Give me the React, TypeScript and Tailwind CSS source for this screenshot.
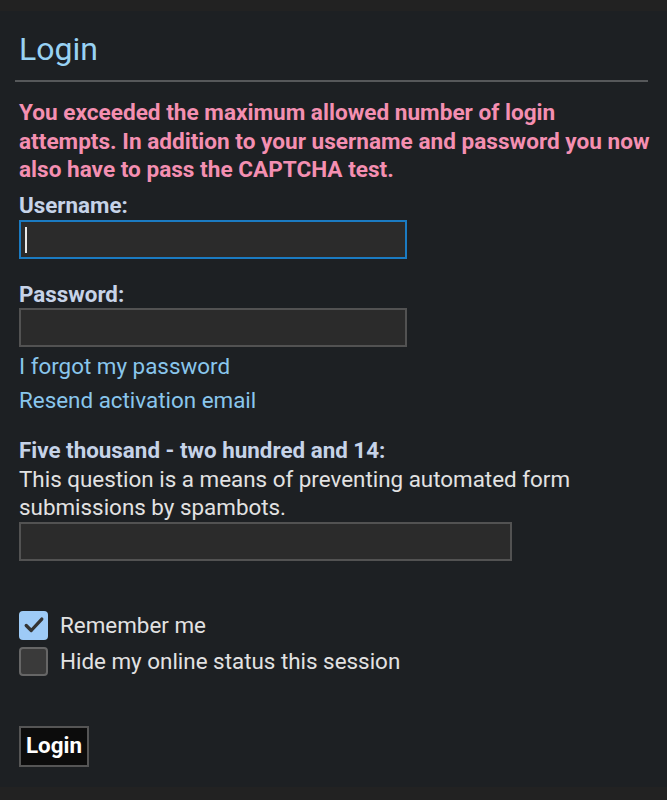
import React from 'react';

const font = { fontFamily: 'Roboto, "Noto Sans", sans-serif' };

const TextBox: React.FC<{ width: string; focused?: boolean }> = ({ width, focused }) => (
  <div
    className={`relative h-[39px] bg-[#2b2b2b] border-2 ${width} ${
      focused ? 'border-[#1b7bc2]' : 'border-[#525252]'
    }`}
  >
    {focused && <div className="absolute left-[4px] top-[5px] h-[26px] w-[2px] bg-[#e8e8e8]" />}
  </div>
);

const Check: React.FC<{ checked?: boolean; label: string }> = ({ checked, label }) => (
  <label className="flex items-center gap-[12px]">
    <span
      className={`flex h-[29px] w-[29px] items-center justify-center rounded-[4px] ${
        checked ? 'bg-[#9ecbf7]' : 'bg-[#3a3a3a] border-2 border-[#666]'
      }`}
    >
      {checked && (
        <svg viewBox="0 0 24 24" className="h-[22px] w-[22px]">
          <path d="M3.5 12.5 L9 18 L20.5 5.5" fill="none" stroke="#333" strokeWidth="3.6" strokeLinecap="round" strokeLinejoin="round" />
        </svg>
      )}
    </span>
    <span className="text-[22.4px] leading-[28px] text-[#e2e2e2]">{label}</span>
  </label>
);

export default function App() {
  return (
    <div className="min-h-[800px] bg-[#222222] pt-[11px]" style={font}>
      <div className="bg-[#1d2023] pl-[19px] pr-[15px] pt-[20px] pb-[20px]">
        <h2 className="text-[32px] leading-[36px] font-normal text-[#98d2f3]">Login</h2>
        <div className="mt-[13px] -ml-[4px] mr-[4px] h-[2px] bg-[#56585a]" />

        <p className="mt-[17px] text-[22.6px] leading-[28.5px] font-bold text-[#f48fb1]">
          You exceeded the maximum allowed number of login attempts. In addition to your username and password you now
          also have to pass the CAPTCHA test.
        </p>

        <div className="mt-[8px] text-[22.4px] leading-[24px] font-bold text-[#c6d3e8]">Username:</div>
        <div className="mt-[3px]">
          <TextBox width="w-[388px]" focused />
        </div>

        <div className="mt-[23px] text-[22.4px] leading-[24px] font-bold text-[#c6d3e8]">Password:</div>
        <div className="mt-[2px]">
          <TextBox width="w-[388px]" />
        </div>

        <div className="mt-[5px] flex flex-col gap-[6px] text-[22.4px] leading-[28px] text-[#89c6ec]">
          <a>I forgot my password</a>
          <a>Resend activation email</a>
        </div>

        <div className="mt-[24px] text-[22.4px] leading-[24px] font-bold text-[#c6d3e8]">
          Five thousand - two hundred and 14:
        </div>
        <p className="mt-[3px] text-[22.4px] leading-[28px] text-[#e2e2e2]">
          This question is a means of preventing automated form submissions by spambots.
        </p>
        <div className="mt-[1px]">
          <TextBox width="w-[493px]" />
        </div>

        <div className="mt-[50px] flex flex-col gap-[7px]">
          <Check checked label="Remember me" />
          <Check label="Hide my online status this session" />
        </div>

        <button className="mt-[50px] h-[41px] border-2 border-[#555] bg-[#0c0c0c] px-[5px] text-[22.4px] font-bold text-white">
          Login
        </button>
      </div>
    </div>
  );
}
